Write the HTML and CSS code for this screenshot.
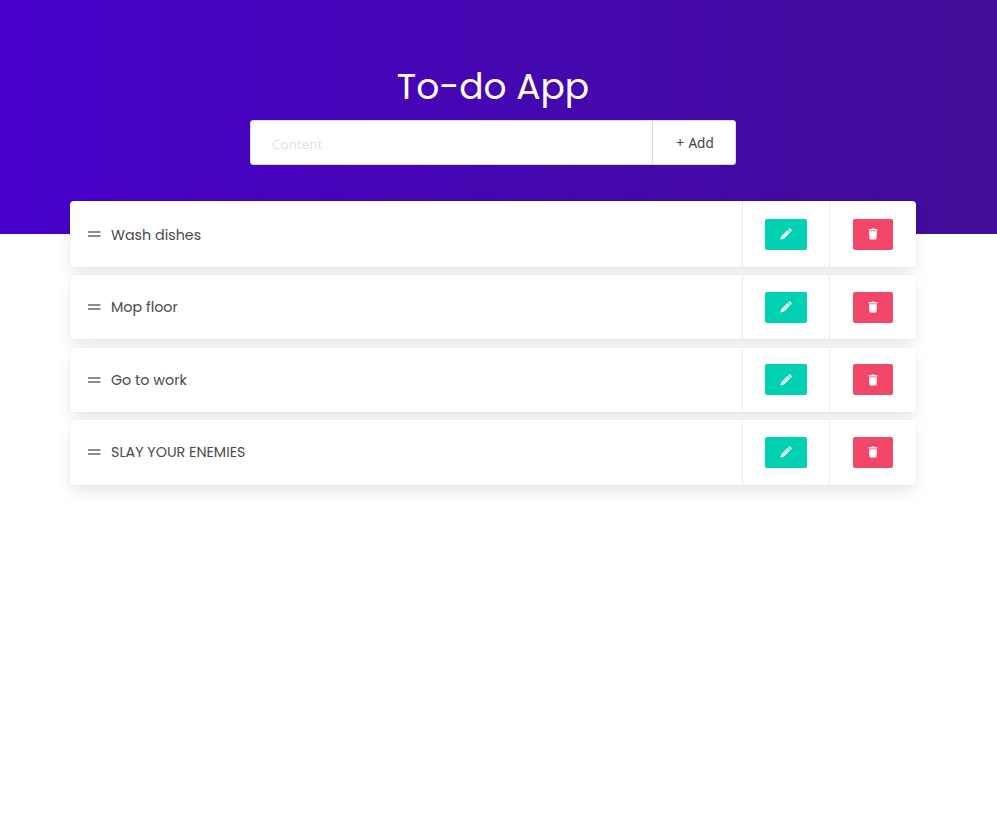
FILE: index.html
```html
<!DOCTYPE html>
<html lang="en">
<head>
<meta charset="utf-8">
<title>To-do App</title>
<link rel="stylesheet" href="styles.css">
</head>
<body>
<svg class="sprite" aria-hidden="true">
  <symbol id="grip" viewBox="0 0 14 8"><path d="M1 2h12.5M1 6h12.5" stroke="currentColor" stroke-width="1.8"/></symbol>
  <symbol id="pencil" viewBox="0 0 12 12"><path fill="currentColor" d="M8.1 1.3 9 .5q.6-.5 1.2 0l1.3 1.3q.5.6 0 1.2l-.8.9zM7.5 1.9l2.6 2.6-6.3 6.3-3.2.7q-.3 0-.2-.3l.8-3z"/><path d="M3.2 7.9 7.6 3.5M1.3 8.7l2 2" stroke="#00d1b2" stroke-width=".55" fill="none"/></symbol>
  <symbol id="trash" viewBox="0 0 10 12"><path fill="currentColor" d="M.5 1.2h2.6L3.6.4h2.8l.5.8h2.6v1.4h-9zM1 3.3h8l-.5 7.3q-.1 1-1.1 1H2.6q-1 0-1.1-1z"/></symbol>
</svg>
<header class="hero">
  <h1 class="title">To-do App</h1>
  <form class="add-form">
    <input class="field" type="text" placeholder="Content" aria-label="Content">
    <button class="add" type="button">+ Add</button>
  </form>
</header>
<main class="list">
  <article class="item first">
    <div class="task"><svg class="grip"><use href="#grip"/></svg><span class="label">Wash dishes</span></div>
    <div class="cell"><button class="btn edit" aria-label="Edit"><svg class="pencil"><use href="#pencil"/></svg></button></div>
    <div class="cell"><button class="btn remove" aria-label="Delete"><svg class="trash"><use href="#trash"/></svg></button></div>
  </article>
  <article class="item second">
    <div class="task"><svg class="grip"><use href="#grip"/></svg><span class="label">Mop floor</span></div>
    <div class="cell"><button class="btn edit" aria-label="Edit"><svg class="pencil"><use href="#pencil"/></svg></button></div>
    <div class="cell"><button class="btn remove" aria-label="Delete"><svg class="trash"><use href="#trash"/></svg></button></div>
  </article>
  <article class="item third">
    <div class="task"><svg class="grip"><use href="#grip"/></svg><span class="label">Go to work</span></div>
    <div class="cell"><button class="btn edit" aria-label="Edit"><svg class="pencil"><use href="#pencil"/></svg></button></div>
    <div class="cell"><button class="btn remove" aria-label="Delete"><svg class="trash"><use href="#trash"/></svg></button></div>
  </article>
  <article class="item fourth">
    <div class="task"><svg class="grip"><use href="#grip"/></svg><span class="label">SLAY YOUR ENEMIES</span></div>
    <div class="cell"><button class="btn edit" aria-label="Edit"><svg class="pencil"><use href="#pencil"/></svg></button></div>
    <div class="cell"><button class="btn remove" aria-label="Delete"><svg class="trash"><use href="#trash"/></svg></button></div>
  </article>
</main>
</body>
</html>
```
FILE: styles.css
```css
* { box-sizing: border-box; }
body { margin: 0; min-height: 100vh; background: #fff; color: #4a4a4a; font-family: Poppins, Inter, sans-serif; }
.sprite { display: none; }
svg { display: block; }
button, input { margin: 0; font: inherit; }
.hero {
  height: 234px;
  padding: 60px 11px 0 0;
  display: flex;
  flex-direction: column;
  align-items: center;
  background: linear-gradient(90deg, #4800cb 0%, #420d97 100%);
}
.title {
  margin: 0;
  height: 60px;
  line-height: 54px;
  font-size: 36px;
  font-weight: 400;
  color: #fff;
  white-space: nowrap;
}
.add-form {
  display: flex;
  width: 486px;
  height: 45px;
  background: #fff;
  border: 1px solid #dbdbdb;
  border-radius: 3px;
  font: 14px "Noto Sans", sans-serif;
}
.field {
  width: 402px;
  padding: 1px 21px 0;
  border: 0;
  border-right: 1px solid #dbdbdb;
  background: transparent;
  outline: 0;
}
.field::placeholder { color: #d6d6d6; opacity: 1; font-size: 13.5px; font-weight: 300; letter-spacing: .2px; }
.add {
  flex: 1;
  padding: 1px 0 0 2px;
  border: 0;
  background: transparent;
  color: #404040;
  font-size: 13.5px;
  word-spacing: 1px;
}
.list { width: 846px; margin: -33px 0 0 70px; }
.item {
  display: flex;
  border-radius: 4px;
  background: #fff;
  box-shadow: 0 8px 16px -2px rgba(10, 10, 10, .1), 0 0 0 1px rgba(10, 10, 10, .02);
}
.first { height: 66px; margin-bottom: 8px; }
.second { height: 64px; margin-bottom: 9px; }
.third { height: 64px; margin-bottom: 8px; }
.fourth { height: 65px; }
.task { flex: 1; display: flex; align-items: center; padding-left: 17px; }
.first .label { padding-top: 2px; }
.fourth .grip { margin-bottom: 1px; }
.grip { width: 14px; height: 8px; margin-right: 10px; color: #8c8c8c; }
.label { font-size: 14.3px; white-space: nowrap; }
.cell {
  width: 87px;
  display: flex;
  align-items: center;
  justify-content: center;
  border-left: 1px solid #ededed;
}
.third .cell, .fourth .cell { padding-bottom: 1px; }
.btn {
  display: flex;
  align-items: center;
  justify-content: center;
  height: 31px;
  padding: 0;
  border: 0;
  border-radius: 2px;
  color: #fff;
}
.edit { width: 42px; background: #00d1b2; }
.remove { width: 40px; background: #f14668; }
.pencil { width: 12px; height: 12px; }
.trash { width: 10px; height: 12px; }
```
